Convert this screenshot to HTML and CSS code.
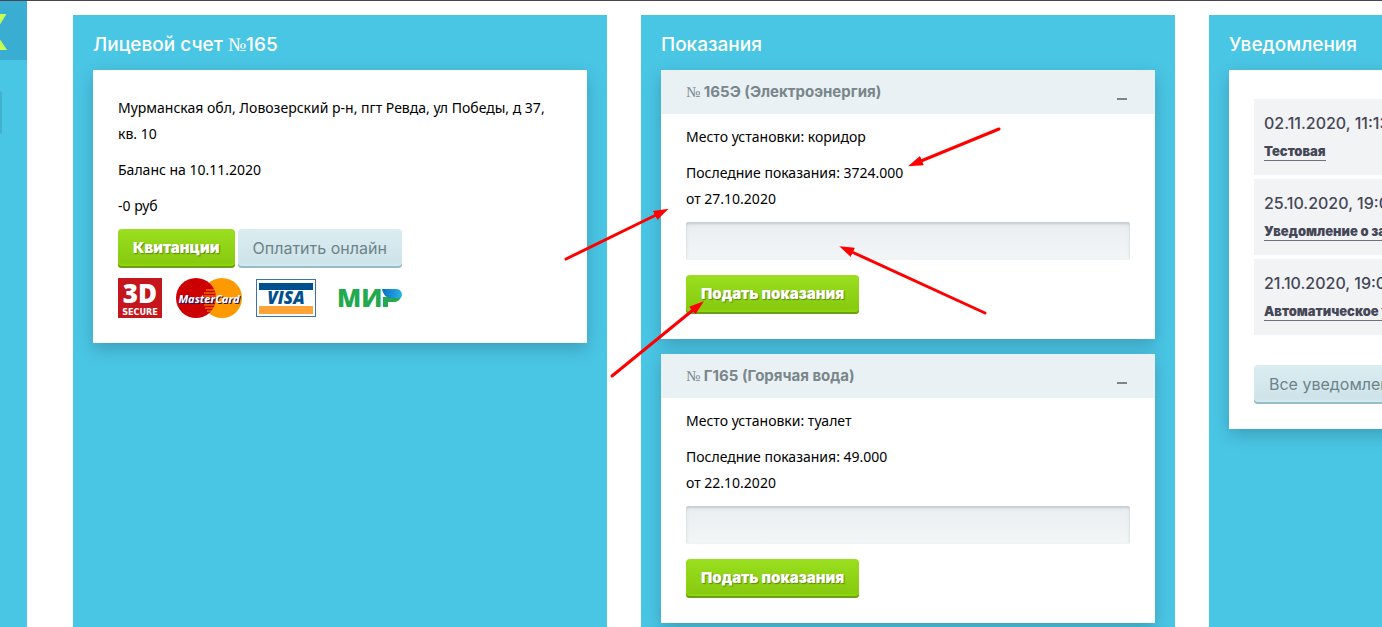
FILE: index.html
```
<!DOCTYPE html>
<html lang="ru">
<head>
    <meta charset="UTF-8">
    <meta name="viewport" content="width=device-width, initial-scale=1.0">
    <title>Личный кабинет</title>
    <link rel="stylesheet" href="styles.css">
</head>
<body>
    <aside class="sidebar">
        <div class="logo">Х</div>
        <div class="menu-item"></div>
    </aside>

    <main class="columns">
        <section class="panel">
            <h2 class="panel-title">Лицевой счет <span class="num">№</span>165</h2>
            <div class="card account">
                <p>Мурманская обл, Ловозерский р-н, пгт Ревда, ул Победы, д 37, кв. 10</p>
                <p>Баланс на 10.11.2020</p>
                <p>-0 руб</p>
                <div class="actions">
                    <button type="button" class="btn btn-green">Квитанции</button>
                    <button type="button" class="btn btn-light">Оплатить онлайн</button>
                </div>
                <div class="payments">
                    <svg width="44" height="40" viewBox="0 0 44 40">
                        <rect width="44" height="40" fill="#c4161c"/>
                        <text class="logo-3d" x="22" y="25" text-anchor="middle">3D</text>
                        <text class="logo-secure" x="22" y="37" text-anchor="middle">SECURE</text>
                    </svg>
                    <svg width="66" height="40" viewBox="0 0 66 40">
                        <circle cx="46" cy="20" r="20" fill="#ff9900"/>
                        <circle cx="20" cy="20" r="20" fill="#cc0000"/>
                        <path d="M30 12h8M28 15h11M28 18h12M28 21h12M28 24h12M28 27h11M29 30h9M31 33h5" stroke="#ff9900" stroke-width="1"/>
                        <text class="logo-mc logo-mc-shadow" x="34" y="26" text-anchor="middle">MasterCard</text>
                        <text class="logo-mc" x="33" y="25" text-anchor="middle">MasterCard</text>
                    </svg>
                    <svg width="60" height="40" viewBox="0 0 60 40">
                        <rect x="0.5" y="1.5" width="59" height="37" fill="#fff" stroke="#3c72a8"/>
                        <rect x="3" y="5" width="54" height="7" fill="#00508f"/>
                        <rect x="3" y="28" width="54" height="8" fill="#ffa336"/>
                        <text class="logo-visa" x="30" y="26" text-anchor="middle">VISA</text>
                    </svg>
                    <svg width="72" height="40" viewBox="0 0 72 40">
                        <defs>
                            <linearGradient id="mir" x1="0" x2="1">
                                <stop offset="0" stop-color="#0a6fc2"/>
                                <stop offset="1" stop-color="#2bb2e8"/>
                            </linearGradient>
                        </defs>
                        <text class="logo-mir" x="7" y="29">МИ</text>
                        <path d="M53 19h18c-1 3-4 5-7 5h-6v5h-5z" fill="#23a94f"/>
                        <path d="M52 11h14c4 0 6 3 6 6l-1 3H60c-4 0-7-4-8-9z" fill="url(#mir)"/>
                    </svg>
                </div>
            </div>
        </section>

        <section class="panel">
            <h2 class="panel-title">Показания</h2>
            <form class="card meter">
                <div class="meter-head">
                    <h3 class="meter-title"><span class="num">№</span> 165Э (Электроэнергия)</h3>
                    <button type="button" class="collapse" aria-label="Свернуть"></button>
                </div>
                <div class="meter-body">
                    <p>Место установки: коридор</p>
                    <p><label for="value1">Последние показания: 3724.000<br>от 27.10.2020</label></p>
                    <input type="text" id="value1" class="field">
                    <button type="button" class="btn btn-green">Подать показания</button>
                </div>
            </form>
            <form class="card meter">
                <div class="meter-head">
                    <h3 class="meter-title"><span class="num">№</span> Г165 (Горячая вода)</h3>
                    <button type="button" class="collapse" aria-label="Свернуть"></button>
                </div>
                <div class="meter-body">
                    <p>Место установки: туалет</p>
                    <p><label for="value2">Последние показания: 49.000<br>от 22.10.2020</label></p>
                    <input type="text" id="value2" class="field">
                    <button type="button" class="btn btn-green">Подать показания</button>
                </div>
            </form>
        </section>

        <section class="panel">
            <h2 class="panel-title">Уведомления</h2>
            <div class="card notices">
                <ul class="notice-list">
                    <li class="notice"><time>02.11.2020, 11:13</time><a href="#">Тестовая</a></li>
                    <li class="notice"><time>25.10.2020, 19:00</time><a href="#">Уведомление о задолженности</a></li>
                    <li class="notice"><time>21.10.2020, 19:00</time><a href="#">Автоматическое уведомление</a></li>
                </ul>
                <button type="button" class="btn btn-light">Все уведомления</button>
            </div>
        </section>
    </main>

    <!-- стрелки-подсказки поверх страницы -->
    <svg class="arrows" width="1382" height="627" viewBox="0 0 1382 627">
        <defs>
            <marker id="head" markerUnits="userSpaceOnUse" markerWidth="16" markerHeight="10" refX="1" refY="5" orient="auto">
                <path d="M0 0L15 5L0 10z" fill="#f00"/>
            </marker>
        </defs>
        <g stroke="#f00" stroke-width="3" stroke-linecap="round">
            <path d="M999 129L921 161" marker-end="url(#head)"/>
            <path d="M566 259L656 215" marker-end="url(#head)"/>
            <path d="M985 313L852 252" marker-end="url(#head)"/>
            <path d="M612 376L693 310" marker-end="url(#head)"/>
        </g>
    </svg>
</body>
</html>
```
FILE: styles.css
```
* {
    margin: 0;
    padding: 0;
    box-sizing: border-box;
}

body {
    position: relative;
    display: flex;
    min-height: 100vh;
    overflow-x: hidden;
    border-top: 1px solid #4a4450;
    background-color: #fff;
    color: #000;
    font-family: "Noto Sans", "Open Sans", sans-serif;
    font-size: 14px;
    line-height: 26px;
}

/* левая полоса */
.sidebar {
    flex: 0 0 27px;
    background-color: #4ac6e5;
    overflow: hidden;
}

.logo {
    display: flex;
    justify-content: flex-end;
    align-items: center;
    height: 59px;
    padding-right: 20px;
    background-color: #3aadd2;
    color: #c6ff56;
    font-size: 50px;
    font-weight: 900;
}

.menu-item {
    width: 2px;
    height: 43px;
    margin-top: 31px;
    border-radius: 0 4px 4px 0;
    background-color: #41b1cd;
}

/* колонки, третья уходит за край окна */
.columns {
    flex: 1;
    display: grid;
    grid-template-columns: repeat(3, 1fr);
    gap: 34px;
    margin-right: -361px;
    padding: 14px 0 0 46px;
}

.panel {
    padding: 0 20px 15px;
    background-color: #4ac6e5;
}

.panel-title {
    padding: 17px 0 12px;
    color: #fff;
    font-family: Inter, sans-serif;
    font-size: 19px;
    font-weight: 500;
}

.num {
    font-family: "Liberation Serif", serif;
    font-weight: 400;
    line-height: 1;
}

.card {
    margin-bottom: 15px;
    background-color: #fff;
    box-shadow: 0 6px 16px rgba(30, 70, 90, 0.3);
}

.card p {
    margin-bottom: 10px;
}

.account,
.notices {
    padding: 25px;
}

.actions {
    display: flex;
    gap: 3px;
    margin-bottom: 10px;
}

.btn {
    height: 39px;
    padding: 0 15px 2px;
    border: none;
    border-radius: 4px;
    font-family: Inter, sans-serif;
    font-size: 16px;
    white-space: nowrap;
    cursor: pointer;
}

.btn-green {
    background: linear-gradient(#9bdf20, #84c70d);
    box-shadow: inset 0 -2px 0 #6c9f17, inset 0 -4px 2px #8ed80c;
    color: #fff;
    font-size: 15px;
    font-weight: 900;
    text-shadow: 1px 1px 1px rgba(60, 90, 0, 0.6);
}

.btn-light {
    background: linear-gradient(#dbedf1, #cce2e8);
    box-shadow: inset 0 -2px 0 #98bbc5, inset 0 -4px 2px #d3eaef;
    color: #6d8389;
}

.payments {
    display: flex;
    gap: 14px;
}

.logo-3d,
.logo-secure {
    fill: #fff;
    font-family: "Open Sans", sans-serif;
    font-weight: 800;
}

.logo-3d {
    font-size: 26px;
}

.logo-secure {
    font-family: "DejaVu Sans Condensed", "Open Sans", sans-serif;
    font-size: 9px;
}

.logo-mc {
    fill: #fff;
    font-family: "Open Sans", sans-serif;
    font-size: 11px;
    font-style: italic;
    font-weight: 700;
}

.logo-mc-shadow {
    fill: #1b1464;
}

.logo-visa {
    fill: #00508f;
    font-family: "Open Sans", sans-serif;
    font-size: 17px;
    font-style: italic;
    font-weight: 800;
}

.logo-mir {
    fill: #23a94f;
    font-family: "Open Sans", sans-serif;
    font-size: 25px;
    font-weight: 800;
}

/* счетчики */
.meter-head {
    display: flex;
    justify-content: space-between;
    align-items: center;
    height: 44px;
    padding: 0 25px;
    background-color: #e9f1f5;
}

.meter-title {
    color: #79868a;
    font-family: Inter, sans-serif;
    font-size: 15px;
    font-weight: 700;
}

.collapse {
    width: 16px;
    height: 16px;
    border: 3px solid transparent;
    border-bottom: none;
    background: linear-gradient(#79868a, #79868a) bottom / 100% 2px no-repeat;
    cursor: pointer;
}

.meter-body {
    padding: 10px 25px 25px;
}

.field {
    display: block;
    width: 100%;
    height: 38px;
    margin-bottom: 15px;
    padding: 0 10px;
    border: none;
    border-radius: 2px;
    background: linear-gradient(#e9edf0, #f3f6f7);
    box-shadow: inset 0 2px 3px rgba(100, 120, 130, 0.3);
    font-size: 14px;
}

.btn,
.collapse {
    display: block;
}

/* уведомления */
.notice-list {
    display: flex;
    flex-direction: column;
    gap: 4px;
    margin: 4px 0 30px;
    list-style: none;
}

.notice {
    padding: 10px;
    background-color: #f1f3f5;
    color: #454757;
    font-family: Inter, sans-serif;
    line-height: 28px;
}

.notice time {
    display: block;
    font-size: 16px;
    font-weight: 500;
}

.notice a {
    display: inline-block;
    border-bottom: 1px solid #6e7280;
    color: inherit;
    font-size: 13px;
    font-weight: 900;
    line-height: 18px;
    text-decoration: none;
}

.arrows {
    position: absolute;
    top: -1px;
    left: 0;
    pointer-events: none;
}
```
